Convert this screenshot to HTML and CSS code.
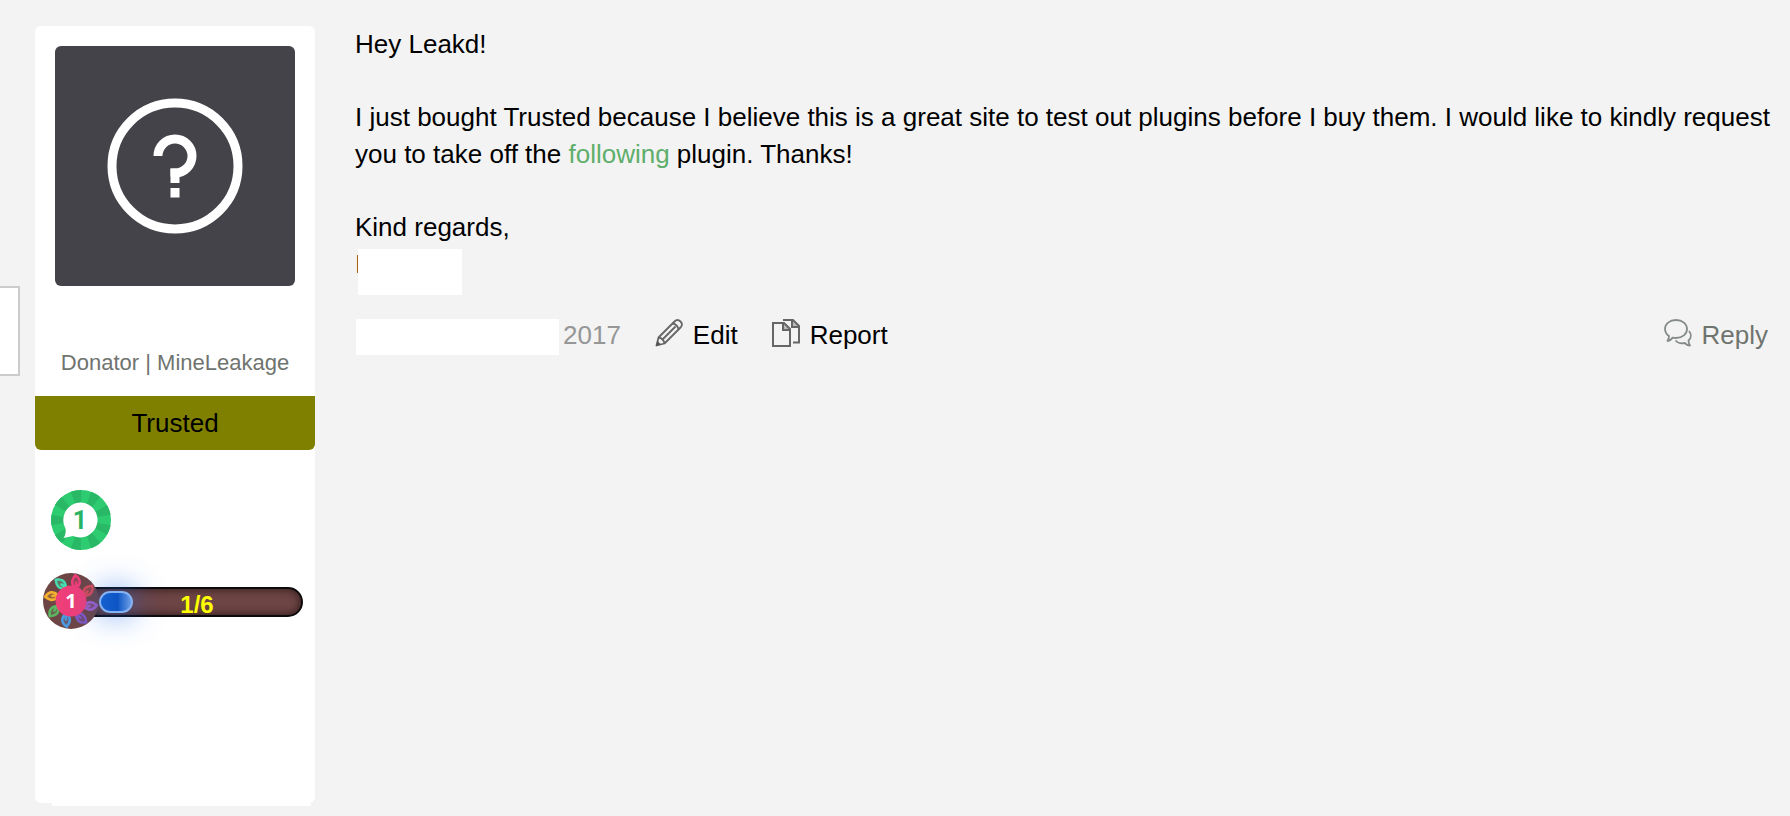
FILE: index.html
```html
<!DOCTYPE html>
<html lang="en">
<head>
    <meta charset="UTF-8">
    <meta name="viewport" content="width=device-width, initial-scale=1.0">
    <title>Hey Leakd!</title>
    <link rel="stylesheet" href="styles.css">
</head>
<body>
    <div class="post">
        <div class="side-tab"></div>
        <div class="user-column">
            <div class="user-card">
                <svg class="avatar" viewBox="0 0 240 240" aria-hidden="true">
                    <rect width="240" height="240" fill="#444349"/>
                    <g fill="none" stroke="#fff" stroke-width="9">
                        <circle cx="120" cy="120" r="63"/>
                        <path d="M103 110a17 17 0 1 1 17 17v10"/>
                        <path d="M120 142v9.500"/>
                    </g>
                    <path d="M115.500 122.500h6v8h-6z" fill="#fff"/>
                </svg>
                <div class="user-title">Donator | MineLeakage</div>
                <div class="user-banner">Trusted</div>
                <svg class="medal" viewBox="0 0 60 60" aria-hidden="true">
                    <circle cx="30" cy="30" r="30" fill="#2ecc71"/>
                    <circle cx="30" cy="30" r="15" fill="none" stroke="#29b866" stroke-width="30" pathLength="180" stroke-dasharray="10 10" transform="rotate(10 30 30)"/>
                    <path d="M30 12.500a17.500 17.500 0 1 1-8 33.500l-9.500 2c2-3 2.500-6 2-9.500A17.500 17.500 0 0 1 30 12.500z" fill="#fff"/>
                    <text class="medal-number" x="29" y="39" text-anchor="middle">1</text>
                </svg>
                <div class="level">
                    <svg class="level-icon" viewBox="0 0 56 56" aria-hidden="true">
                        <defs>
                            <path id="leaf" d="M30 14c-6-1-8-5-5-12c6 2 8 6 5 12c-1-3-2-5-3-6" fill-opacity=".3" stroke-width="2.500" stroke-linejoin="round"/>
                        </defs>
                        <circle cx="28" cy="28" r="28" fill="#6e4545"/>
                        <use href="#leaf" stroke="#ee3f79" fill="#ee3f79" transform="rotate(16 28 28)"/>
                        <use href="#leaf" stroke="#d94b55" fill="#d94b55" transform="rotate(61 28 28)"/>
                        <use href="#leaf" stroke="#a45fc4" fill="#a45fc4" transform="rotate(106 28 28)"/>
                        <use href="#leaf" stroke="#7e57c2" fill="#7e57c2" transform="rotate(151 28 28)"/>
                        <use href="#leaf" stroke="#4a9be0" fill="#4a9be0" transform="rotate(196 28 28)"/>
                        <use href="#leaf" stroke="#5cb562" fill="#5cb562" transform="rotate(241 28 28)"/>
                        <use href="#leaf" stroke="#f5b02e" fill="#f5b02e" transform="rotate(286 28 28)"/>
                        <use href="#leaf" stroke="#45dcb0" fill="#45dcb0" transform="rotate(331 28 28)"/>
                        <circle cx="28" cy="28" r="15.500" fill="#ee3f79"/>
                        <text class="level-number" x="28" y="35" text-anchor="middle">1</text>
                    </svg>
                    <div class="level-bar">
                        <div class="level-fill"></div>
                        <span class="level-text">1/6</span>
                    </div>
                </div>
            </div>
            <div class="card-foot"></div>
        </div>
        <div class="message">
            <p>Hey Leakd!</p>
            <p>I just bought Trusted because I believe this is a great site to test out plugins before I buy them. I would like to kindly request you to take off the <a class="text-link" href="#">following</a> plugin. Thanks!</p>
            <p>Kind regards,<br><span class="signature">I<span class="name-cover"></span></span></p>
            <div class="message-meta">
                <span class="date-cover"></span>
                <span class="date">2017</span>
                <a class="action" href="#">
                    <svg viewBox="0 0 28 28" aria-hidden="true">
                        <g fill="none" stroke="#666" stroke-width="1.800" stroke-linejoin="round">
                            <path d="M1.500 26.500l2-8L19.500 2.500c2-2 4-2 6 0s2 4 0 6L9.500 24.500z"/>
                            <path d="M3.500 18.500c3 .5 5.500 3 6 6M7 21L20.500 7.500M17.500 4.500c3 .5 5.500 3 6 6"/>
                        </g>
                        <path d="M1 27l1.500-5 3.500 3.500z" fill="#555"/>
                    </svg>
                    Edit
                </a>
                <a class="action" href="#">
                    <svg viewBox="0 0 28 28" aria-hidden="true">
                        <g fill="none" stroke="#666" stroke-width="2">
                            <path d="M1 4h11l6 6v17H1z"/>
                            <path d="M11 4v7h7" fill="#666" fill-opacity=".4"/>
                            <path d="M11 1h10l6 6v16.500h-6"/>
                            <path d="M20 1v7h7" fill="#666" fill-opacity=".4"/>
                        </g>
                    </svg>
                    Report
                </a>
                <a class="action reply" href="#">
                    <svg viewBox="0 0 28 28" aria-hidden="true">
                        <g fill="none" stroke="#858c88" stroke-width="1.800" stroke-linejoin="round">
                            <path d="M12 1c6.500 0 11 4 11 9s-4.500 9-11 9c-1.200 0-2.300-.1-3.300-.4C7.500 20.500 6 21.800 3.500 22c1-1.500 1.500-3 1.500-5C2.500 15.300 1 13 1 10c0-5 4.500-9 11-9z"/>
                            <path d="M25 12c2 2.500 3 6.500-.5 9.500 0 2 .5 3.500 1.500 5-2.500 0-4-1-5-2.500-4 .8-7.500-.2-9.500-2.500"/>
                        </g>
                    </svg>
                    Reply
                </a>
            </div>
        </div>
    </div>
</body>
</html>
```

FILE: styles.css
```css
* {
    margin: 0;
    padding: 0;
    box-sizing: border-box;
}

body {
    background: #f3f3f3;
    color: #000;
    font-family: "Liberation Sans", Arial, sans-serif;
    font-size: 26px;
    line-height: 37px;
}

a {
    color: inherit;
    text-decoration: none;
}

.post {
    display: flex;
    align-items: flex-start;
    padding: 26px 15px 10px 0;
}

.side-tab {
    flex: 0 0 20px;
    height: 90px;
    margin: 260px 15px 0 0;
    background: #fff;
    border: 2px solid #ccc;
    border-left: 0;
}

/* user info */
.user-column {
    flex: 0 0 280px;
    margin-right: 40px;
}

.user-card {
    padding: 20px 0 174px;
    background: #fff;
    border-radius: 6px;
}

.card-foot {
    height: 3px;
    margin: 0 4px 0 17px;
    background: #fff;
}

.avatar {
    display: block;
    width: 240px;
    height: 240px;
    margin: 0 auto;
    border-radius: 6px;
}

.user-title {
    margin: 63px 0 19px;
    color: #6f746f;
    font-size: 22px;
    line-height: 28px;
    text-align: center;
}

.user-banner {
    background: #808000;
    border-radius: 0 0 6px 6px;
    line-height: 54px;
    text-align: center;
}

.medal {
    display: block;
    width: 60px;
    height: 60px;
    margin: 40px 0 23px 16px;
}

.medal-number {
    fill: #28b463;
    font: bold 25px Roboto, sans-serif;
}

/* level progress */
.level {
    display: flex;
    align-items: center;
    padding: 0 12px 0 8px;
}

.level-icon {
    position: relative;
    z-index: 1;
    width: 56px;
    height: 56px;
}

.level-number {
    fill: #fff;
    font: bold 20px "Open Sans", sans-serif;
}

.level-bar {
    position: relative;
    flex: 1;
    height: 30px;
    margin: 2px 0 0 -8px;
    padding-top: 4px;
    background: #6e4545;
    border: 2px solid #0d0a0a;
    border-radius: 0 15px 15px 0;
    box-shadow: inset 0 0 10px #2b1818;
    text-align: center;
}

.level-fill {
    position: absolute;
    z-index: 2;
    top: 2px;
    left: 6px;
    width: 34px;
    height: 22px;
    background: linear-gradient(to right, #1560d0, #0d55c4 55%, #6c9ee6);
    border: 2px solid #84b2f2;
    border-radius: 11px;
    box-shadow: 0 0 32px rgba(20, 100, 235, 0.8);
}

.level-text {
    display: block;
    color: #ff0;
    font-size: 24px;
    font-weight: bold;
    line-height: 24px;
}

/* message */
.message {
    flex: 1;
    min-width: 0;
}

.message p {
    margin-bottom: 36px;
}

.text-link {
    color: #5fae6b;
}

.signature {
    position: relative;
}

.name-cover {
    position: absolute;
    top: 0;
    left: 3px;
    width: 104px;
    height: 46px;
    background: #fff;
}

.message-meta {
    display: flex;
    align-items: flex-start;
    margin-right: 7px;
    line-height: 32px;
}

.date-cover {
    width: 203px;
    height: 36px;
    margin: 0 4px 0 1px;
    background: #fff;
}

.date {
    color: #969696;
}

.action {
    display: flex;
    gap: 10px;
    margin-left: 34px;
}

.action svg {
    width: 28px;
    height: 28px;
}

.reply {
    margin-left: auto;
    color: #6f746f;
}
```
